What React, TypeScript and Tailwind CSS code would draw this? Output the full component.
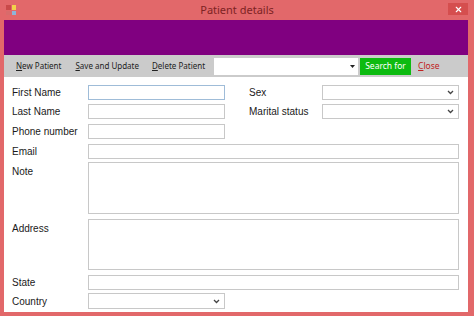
import { X } from 'lucide-react'

const label = 'w-[84px] shrink-0 pl-[8px] text-[10px] text-[#1a1a1a]'
const box = 'h-[15px] border border-[#c8c8c8] bg-white'

function Select({ className }: { className: string }) {
  return (
    <div className={`${className} flex shrink-0 items-center justify-end border border-[#c8c8c8] bg-white pr-[4px]`}>
      <svg width="7" height="5" viewBox="0 0 7 5">
        <path d="M1 1l2.5 2.5L6 1" fill="none" stroke="#444" strokeWidth="1.3" />
      </svg>
    </div>
  )
}

export default function App() {
  return (
    <div className="flex h-[316px] w-[474px] flex-col bg-[#e2686a] font-['Liberation_Sans',Arial,sans-serif]">
      {/* title bar */}
      <div className="relative flex h-[20px] shrink-0 items-center justify-center">
        <div className="absolute left-[6px] top-[5px] h-[10px] w-[10px]">
          <div className="grid h-full w-full grid-cols-2 gap-px">
            <div className="bg-[#c94a4a]" />
            <div className="bg-[#f2d24a]" />
            <div className="bg-[#d96b6b]" />
            <div className="bg-[#8fb4d8]" />
          </div>
        </div>
        <span className="font-['Noto_Sans',sans-serif] text-[11px] text-[#7d2323]">Patient details</span>
        <div className="absolute right-[6px] top-[3px] flex h-[12px] w-[20px] items-center justify-center bg-[#d54e4e]">
          <X size={9} strokeWidth={3} color="#fff" />
        </div>
      </div>

      <div className="mb-[4px] ml-[4px] mr-[6px] flex flex-1 flex-col">
        <div className="h-[35px] shrink-0 bg-[#800080]" />

        {/* toolbar */}
        <div className="flex h-[22px] shrink-0 items-center bg-[#cbcbcb] font-['Noto_Sans',sans-serif] text-[8px] text-[#222]">
          <span className="ml-[12px]"><u>N</u>ew Patient</span>
          <span className="ml-[14px]"><u>S</u>ave and Update</span>
          <span className="ml-[13px]"><u>D</u>elete Patient</span>
          <div className="ml-[9px] flex h-[17px] w-[144px] items-center justify-end bg-white pr-[3px]">
            <svg width="5" height="3" viewBox="0 0 5 3"><path d="M0 0h5L2.5 3z" fill="#222" /></svg>
          </div>
          <div className="ml-[2px] flex h-[17px] w-[51px] items-center justify-center bg-[#0dbb10] text-[8.5px] text-white">Search for</div>
          <span className="ml-[7px] text-[8.5px] text-[#c02020]"><u>C</u>lose</span>
        </div>

        {/* form */}
        <div className="flex flex-1 flex-col bg-white pr-[9px] pt-[8px]">
          <div className="flex items-center">
            <span className={label}>First Name</span>
            <div className="h-[15px] w-[137px] shrink-0 border border-[#9fbcd8] bg-white" />
            <span className="ml-[24px] w-[73px] shrink-0 text-[10px] text-[#1a1a1a]">Sex</span>
            <Select className="h-[15px] w-[137px]" />
          </div>
          <div className="mt-[4px] flex items-center">
            <span className={label}>Last Name</span>
            <div className={`${box} w-[137px] shrink-0`} />
            <span className="ml-[24px] w-[73px] shrink-0 text-[10px] text-[#1a1a1a]">Marital status</span>
            <Select className="h-[15px] w-[137px]" />
          </div>
          <div className="mt-[5px] flex items-center">
            <span className={label}>Phone number</span>
            <div className={`${box} w-[137px]`} />
          </div>
          <div className="mt-[5px] flex items-center">
            <span className={label}>Email</span>
            <div className={`${box} flex-1`} />
          </div>
          <div className="mt-[3px] flex">
            <span className={`${label} pt-[2px]`}>Note</span>
            <div className="h-[52px] flex-1 border border-[#c8c8c8] bg-white" />
          </div>
          <div className="mt-[5px] flex">
            <span className={`${label} pt-[2px]`}>Address</span>
            <div className="h-[51px] flex-1 border border-[#c8c8c8] bg-white" />
          </div>
          <div className="mt-[5px] flex items-center">
            <span className={label}>State</span>
            <div className={`${box} flex-1`} />
          </div>
          <div className="mt-[3px] flex items-center">
            <span className={label}>Country</span>
            <Select className="h-[16px] w-[137px]" />
          </div>
        </div>
      </div>
    </div>
  )
}
